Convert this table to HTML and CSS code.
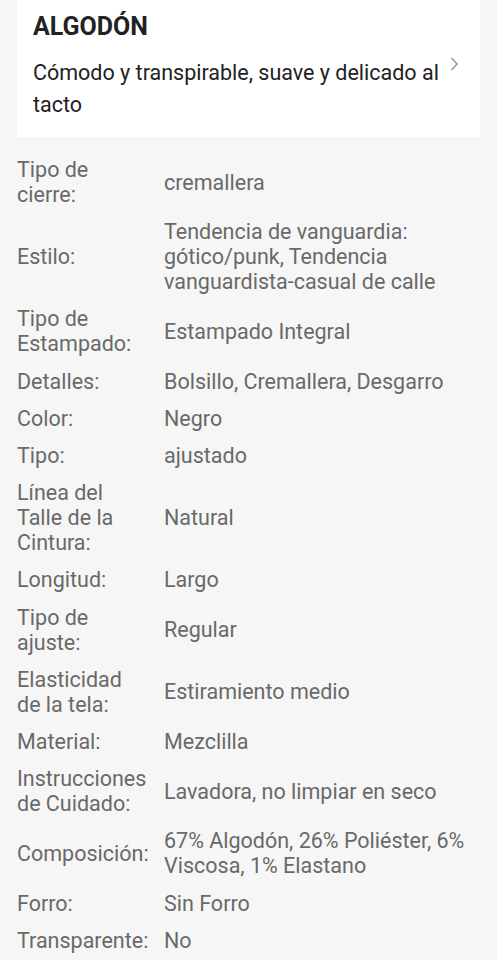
FILE: index.html
```html
<!DOCTYPE html>
<html lang="es">
<head>
  <meta charset="UTF-8" />
  <meta name="viewport" content="width=device-width, initial-scale=1.0" />
  <title>Detalles del producto</title>
  <link rel="stylesheet" href="styles.css">
</head>
<body>

  <div class="fabric-card">
    <h2 class="fabric-title">ALGODÓN</h2>
    <div class="fabric-row">
      <p class="fabric-desc">Cómodo y transpirable, suave y delicado al tacto</p>
      <svg class="chevron" width="10" height="14" viewBox="0 0 10 14">
        <path d="M2.5 1 L8 7 L2.5 13" fill="none" stroke="#9a9a9a" stroke-width="1.6" />
      </svg>
    </div>
  </div>

  <div class="specs">
    <div class="spec"><div class="spec-label">Tipo de cierre:</div><div class="spec-value">cremallera</div></div>
    <div class="spec"><div class="spec-label">Estilo:</div><div class="spec-value">Tendencia de vanguardia: gótico/punk, Tendencia vanguardista-casual de calle</div></div>
    <div class="spec"><div class="spec-label">Tipo de Estampado:</div><div class="spec-value">Estampado Integral</div></div>
    <div class="spec"><div class="spec-label">Detalles:</div><div class="spec-value">Bolsillo, Cremallera, Desgarro</div></div>
    <div class="spec"><div class="spec-label">Color:</div><div class="spec-value">Negro</div></div>
    <div class="spec"><div class="spec-label">Tipo:</div><div class="spec-value">ajustado</div></div>
    <div class="spec"><div class="spec-label">Línea del Talle de la Cintura:</div><div class="spec-value">Natural</div></div>
    <div class="spec"><div class="spec-label">Longitud:</div><div class="spec-value">Largo</div></div>
    <div class="spec"><div class="spec-label">Tipo de ajuste:</div><div class="spec-value">Regular</div></div>
    <div class="spec"><div class="spec-label">Elasticidad de la tela:</div><div class="spec-value">Estiramiento medio</div></div>
    <div class="spec"><div class="spec-label">Material:</div><div class="spec-value">Mezclilla</div></div>
    <div class="spec"><div class="spec-label">Instrucciones de Cuidado:</div><div class="spec-value">Lavadora, no limpiar en seco</div></div>
    <div class="spec"><div class="spec-label">Composición:</div><div class="spec-value">67% Algodón, 26% Poliéster, 6% Viscosa, 1% Elastano</div></div>
    <div class="spec"><div class="spec-label">Forro:</div><div class="spec-value">Sin Forro</div></div>
    <div class="spec"><div class="spec-label">Transparente:</div><div class="spec-value">No</div></div>
  </div>

</body>
</html>
```

FILE: styles.css
```css
/* Reset */
* {
  margin: 0;
  padding: 0;
  box-sizing: border-box;
}

body {
  font-family: Roboto, 'Liberation Sans', sans-serif;
  background: #f6f6f6;
  color: #222;
}

/* Fabric card */
.fabric-card {
  margin: 0 17px;
  background: #fff;
  padding: 11px 12px 16px 16px;
}

.fabric-title {
  font-size: 25px;
  line-height: 32px;
  font-weight: 700;
  color: #222;
}

.fabric-row {
  display: flex;
  align-items: flex-start;
  margin-top: 14px;
}

.fabric-desc {
  flex: 1;
  font-size: 21.5px;
  line-height: 32px;
  color: #222;
}

.chevron {
  flex: none;
  margin: 0 9px 0 2px;
}

/* Specs list */
.specs {
  padding: 14px 17px 0;
}

.spec {
  display: grid;
  grid-template-columns: 147px 1fr;
  align-items: center;
  padding: 6.1px 0;
  font-size: 21.5px;
  line-height: 25px;
  color: #696969;
}

.spec-label {
  padding-right: 14px;
}
```
